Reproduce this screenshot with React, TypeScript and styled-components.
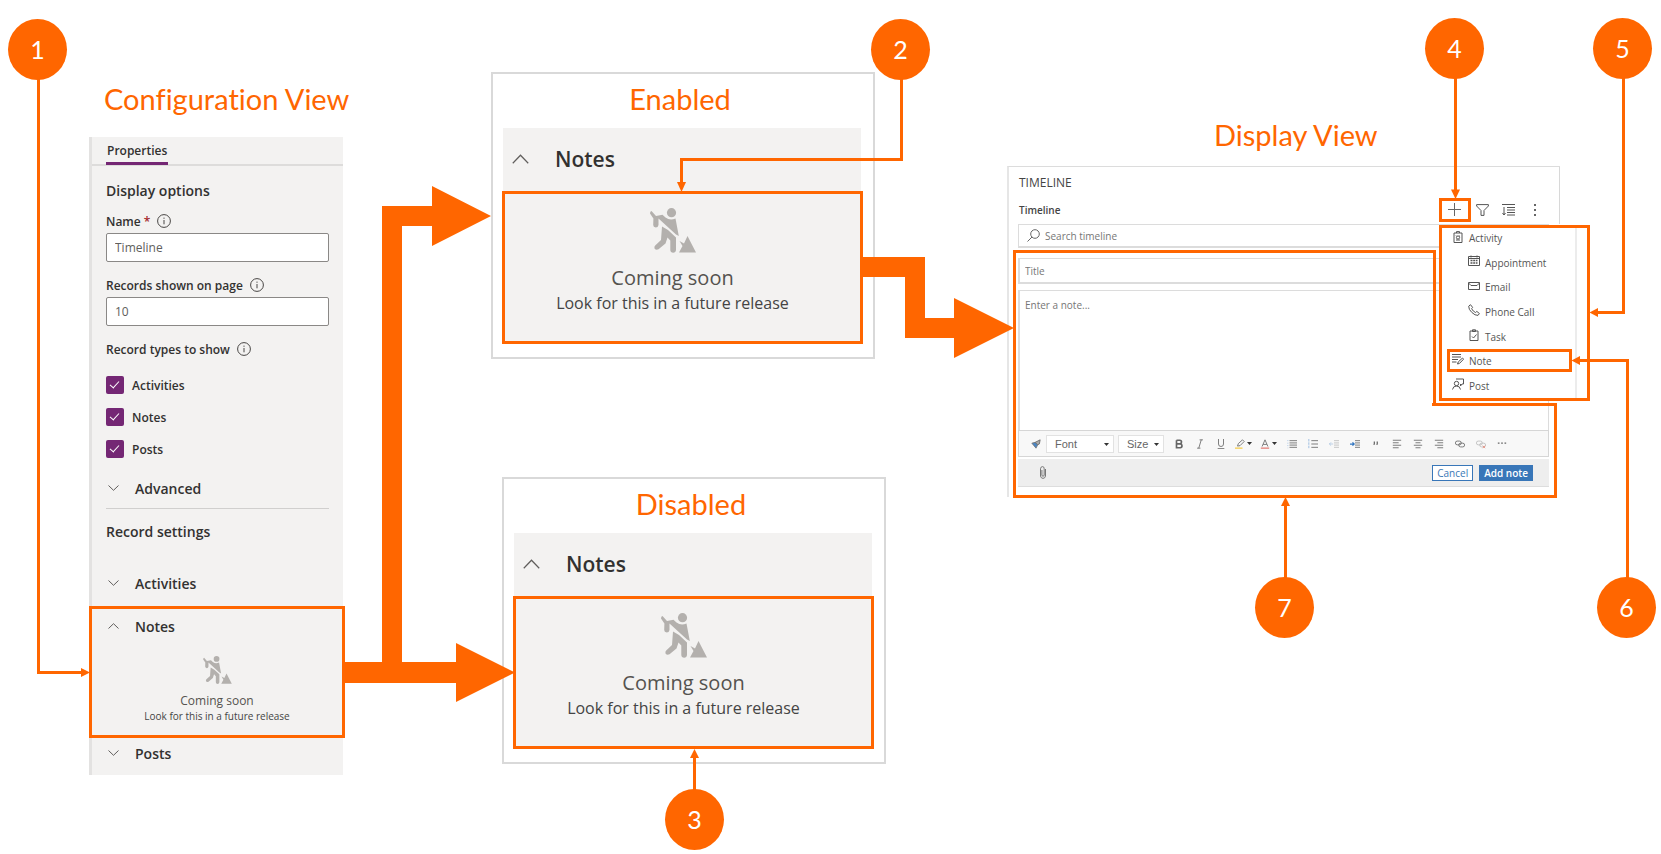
import React from "react";
import styled, { createGlobalStyle, css } from "styled-components";

const ORANGE = "#ff6600";
const PURPLE = "#742774";
const SEGOE = `"Open Sans", "Noto Sans", sans-serif`;
const CALIBRI = `Lato, "Open Sans", sans-serif`;

const GlobalStyle = createGlobalStyle`
  *, *::before, *::after { box-sizing: border-box; }
  body { margin: 0; background: #fff; font-family: ${SEGOE}; color: #323130; }
  button, input, textarea, select { font-family: inherit; font-size: inherit; color: inherit; margin: 0; border-radius: 0; }
  button { background: none; border: 0; padding: 0; }
  h1, h2, h3, p, ul { margin: 0; padding: 0; font-weight: inherit; }
  ul { list-style: none; }
  svg { display: block; flex: none; }
`;

const frame = css`border: 3px solid ${ORANGE};`;

/* ---------- page ---------- */

const Stage = styled.main`
  position: relative;
  display: flex;
  align-items: flex-start;
  min-width: max-content;
  min-height: 100vh;
  padding-left: 89px;
  overflow: hidden;
`;

const Heading = styled.h2`
  font-family: ${CALIBRI};
  font-size: 29px;
  line-height: 36px;
  font-variant-ligatures: none;
  color: ${ORANGE};
  white-space: nowrap;
`;

/* ---------- configuration panel ---------- */

const ConfigColumn = styled.section`
  flex: 0 0 254px;
  min-width: 0;
  padding-top: 81px;
  & > ${Heading} { padding-left: 15px; margin-bottom: 20px; }
`;

const PropertiesPanel = styled.div`
  background: #f3f2f1;
  border-left: 3px solid #e3e2e1;
`;

const Tabs = styled.div`
  display: flex;
  height: 29px;
  padding-left: 14px;
  border-bottom: 2px solid #dddcdb;
`;

const Tab = styled.button`
  height: 28px;
  padding: 3px 1px 0;
  font-size: 12px;
  font-weight: 600;
  line-height: 22px;
  border-bottom: 3px solid ${PURPLE};
`;

const Options = styled.div`
  padding: 13px 14px 0;
`;

const GroupTitle = styled.h3`
  font-size: 14px;
  font-weight: 600;
  line-height: 24px;
`;

const Fields = styled.div`
  padding-top: 6px;
`;

const FieldLabel = styled.div`
  display: flex;
  align-items: center;
  gap: 7px;
  height: 24px;
  font-size: 12px;
  font-weight: 600;
  white-space: nowrap;
  em { color: #a4262c; font-style: normal; margin-left: 3px; }
`;

const TextField = styled.input`
  display: block;
  width: 100%;
  height: 29px;
  padding: 0 8px;
  font-size: 12px;
  color: #605e5c;
  background: #fff;
  border: 1px solid #8a8886;
  border-radius: 2px;
`;

const Field = styled.div`
  margin-bottom: 11px;
`;

const Checks = styled.div`
  display: grid;
  gap: 14px;
  margin: 15px 0 16px;
`;

const CheckLabel = styled.label`
  display: flex;
  align-items: center;
  gap: 8px;
  height: 18px;
  font-size: 12px;
  font-weight: 600;
`;

const Checkbox = styled.input`
  appearance: none;
  position: relative;
  width: 18px;
  height: 18px;
  background: ${PURPLE};
  border-radius: 2px;
  &::after {
    content: "";
    position: absolute;
    left: 6px;
    top: 3px;
    width: 5px;
    height: 9px;
    border: solid #fff;
    border-width: 0 1px 1px 0;
    transform: rotate(42deg);
  }
`;

const Expander = styled.button<{ $large?: boolean }>`
  display: flex;
  align-items: center;
  width: 100%;
  height: ${p => (p.$large ? 63 : 28)}px;
  padding: ${p => (p.$large ? "0 9px 2px" : "0 2px")};
  gap: ${p => (p.$large ? 26 : 16)}px;
  font-size: ${p => (p.$large ? 21 : 14)}px;
  font-weight: 600;
  text-align: left;
`;

const RecordSettings = styled.div`
  margin-top: 6px;
  padding-top: 11px;
  border-top: 1px solid #d0cfce;
`;

const Spacer = styled.div`
  height: 25px;
`;

const NotesSection = styled.div`
  ${frame}
  height: 132px;
  margin: 9px -2px 0 -3px;
  padding: 3px 14px 0;
`;

const Tail = styled.div`
  padding: 1px 14px 8px;
`;

/* ---------- coming soon message ---------- */

const Message = styled.div<{ $large?: boolean }>`
  display: flex;
  flex-direction: column;
  align-items: center;
  text-align: center;
  color: #55534f;
  padding-top: ${p => (p.$large ? 14 : 16)}px;
  padding-right: ${p => (p.$large ? 20 : 0)}px;
`;

const MessageTitle = styled.p<{ $large?: boolean }>`
  margin-top: ${p => (p.$large ? 11 : 8)}px;
  font-size: ${p => (p.$large ? 20 : 12)}px;
  line-height: ${p => (p.$large ? 28 : 17)}px;
`;

const MessageText = styled.p<{ $large?: boolean }>`
  font-size: ${p => (p.$large ? 16 : 10)}px;
  line-height: ${p => (p.$large ? 22 : 14)}px;
  color: #444;
`;

/* ---------- state cards ---------- */

const StatesColumn = styled.section`
  display: flex;
  flex-direction: column;
  gap: 118px;
  flex: 0 0 395px;
  margin-left: 148px;
  padding-top: 72px;
`;

const StateCard = styled.article<{ $end?: boolean }>`
  align-self: ${p => (p.$end ? "flex-end" : "flex-start")};
  width: 384px;
  height: 287px;
  padding: 7px 12px 0 10px;
  border: 2px solid #d9d9d9;
  & > ${Heading} { text-align: center; margin-bottom: 11px; padding-right: 4px; }
`;

const StateHeader = styled.div`
  background: #f3f2f1;
`;

const StateBody = styled.div`
  ${frame}
  height: 153px;
  margin: 0 -2px 0 -1px;
  background: #f3f2f1;
`;

/* ---------- timeline display ---------- */

const DisplayColumn = styled.section`
  flex: 0 0 553px;
  margin-left: 121px;
  padding-top: 117px;
  & > ${Heading} { padding-left: 207px; margin-bottom: 13px; }
`;

const TimelinePanel = styled.div`
  border-top: 1px solid #dcdcdc;
  border-left: 2px solid #e6e6e6;
  padding-bottom: 10px;
`;

const TimelineHeader = styled.header`
  height: 57px;
  padding: 6px 10px 0;
  border-right: 1px solid #d8d8d8;
`;

const PanelTitle = styled.h3`
  font-size: 12px;
  line-height: 20px;
  color: #444;
`;

const CommandRow = styled.div`
  position: relative;
  display: flex;
  align-items: center;
  height: 24px;
  margin-top: 5px;
  strong { flex: 1; font-size: 10px; font-weight: 600; color: #444; }
`;

const AddButton = styled.button`
  ${frame}
  display: grid;
  place-items: center;
  width: 32px;
  height: 24px;
  background: #fff;
`;

const Commands = styled.div`
  display: flex;
  flex: 0 0 78px;
  gap: 2px;
  color: #555;
`;

const IconButton = styled.button`
  display: grid;
  place-items: center;
  width: 24px;
  height: 24px;
`;

const Menu = styled.ul`
  ${frame}
  position: absolute;
  top: 27px;
  right: -41px;
  z-index: 1;
  display: flex;
  flex-direction: column;
  justify-content: space-between;
  width: 151px;
  height: 176px;
  padding-bottom: 1px;
  background: linear-gradient(#ececec, #ececec) right 10px top / 2px 100% no-repeat #fff;
  font-size: 10px;
  color: #555;
`;

const MenuItem = styled.li<{ $nested?: boolean; $marked?: boolean }>`
  button {
    display: flex;
    align-items: center;
    gap: 5px;
    width: 125px;
    height: ${p => (p.$marked ? 23 : 21)}px;
    margin: ${p => (p.$marked ? "-2px 0 0 5px" : "0 0 0 5px")};
    padding-left: ${p => (p.$nested ? 21 : p.$marked ? 2 : 5)}px;
    padding-bottom: ${p => (p.$marked ? 0 : 1)}px;
    ${p => p.$marked && frame}
  }
  svg { margin-bottom: 3px; }
`;

const Form = styled.form`
  width: 540px;
  padding-left: 9px;
`;

const SearchBox = styled.label`
  display: flex;
  align-items: center;
  gap: 5px;
  height: 24px;
  padding-left: 8px;
  border: 1px solid #dcdcdc;
  border-bottom-width: 2px;
`;

const PlainInput = styled.input`
  flex: 1;
  border: 0;
  padding: 0;
  outline: 0;
  background: none;
  font-size: 10px;
  &::placeholder { color: #767676; opacity: 1; }
`;

const TitleBox = styled.label`
  display: flex;
  height: 26px;
  margin-top: 10px;
  padding-left: 5px;
  border: 1px solid #dcdcdc;
  border-width: 1px 1px 2px 2px;
`;

const NoteArea = styled.textarea`
  display: block;
  width: 100%;
  height: 140px;
  margin-top: 6px;
  padding: 6px 5px;
  border: solid #dcdcdc;
  border-width: 1px 1px 0 2px;
  resize: none;
  font-size: 10px;
  line-height: 16px;
  &::placeholder { color: #767676; opacity: 1; }
`;

const Toolbar = styled.div`
  display: flex;
  align-items: center;
  height: 27px;
  padding-left: 6px;
  border: 1px solid #d6d6d6;
  background: #f8f8f8;
  color: #666;
`;

const Tool = styled.button<{ $wide?: boolean }>`
  display: flex;
  align-items: center;
  justify-content: center;
  gap: 2px;
  width: ${p => (p.$wide ? 25 : 21)}px;
  height: 20px;
`;

const Picker = styled.span<{ $width: number }>`
  position: relative;
  width: ${p => p.$width}px;
  margin-right: 4px;
  select {
    appearance: none;
    display: block;
    width: 100%;
    height: 18px;
    padding: 0 8px;
    font: 11px "Liberation Sans", sans-serif;
    background: #fff;
    border: 1px solid #e2e2e2;
  }
  svg { position: absolute; right: 5px; top: 8px; }
`;

const Footer = styled.div`
  display: flex;
  align-items: center;
  gap: 6px;
  height: 28px;
  margin-top: 2px;
  padding: 0 16px 0 20px;
  background: #eee;
  border-bottom: 1px solid #ddd;
  svg { margin-right: auto; }
`;

const Action = styled.button<{ $primary?: boolean }>`
  height: 16px;
  padding: 0 4px;
  font-size: 10px;
  line-height: 14px;
  font-weight: ${p => (p.$primary ? 600 : 400)};
  color: ${p => (p.$primary ? "#fff" : "#3a78b5")};
  background: ${p => (p.$primary ? "#3876b8" : "#fff")};
  border: 1px solid #3876b8;
`;

/* ---------- callouts ---------- */

const Connectors = styled.svg`
  position: absolute;
  left: 0;
  top: 0;
  z-index: 2;
  pointer-events: none;
`;

const Badge = styled.span<{ $x: number; $y: number }>`
  position: absolute;
  left: ${p => p.$x}px;
  top: ${p => p.$y}px;
  z-index: 3;
  display: grid;
  place-items: center;
  width: 59px;
  height: 61px;
  padding-bottom: 1px;
  border-radius: 50%;
  background: ${ORANGE};
  color: #fff;
  font-family: ${CALIBRI};
  font-size: 25px;
`;

const badges = [
  { n: 1, x: 8, y: 19 },
  { n: 2, x: 871, y: 19 },
  { n: 3, x: 665, y: 789 },
  { n: 4, x: 1425, y: 18 },
  { n: 5, x: 1593, y: 18 },
  { n: 6, x: 1597, y: 577 },
  { n: 7, x: 1255, y: 577 },
];

function Callouts() {
  return (
    <>
      <Connectors width="1661" height="854" viewBox="0 0 1661 854" aria-hidden="true">
        <g fill={ORANGE}>
          <path d="M345 662H382V206H432V186L491 216L432 246V226H402V662H456V643L515 672.500L456 702V683H345Z" />
          <path d="M861 257H925V318H954V298L1014 328L954 358V338H905V277H861Z" />
          <path d="M90 672.500L81 668V677Z" />
          <path d="M681.500 192L677 182H686Z" />
          <path d="M694.500 749L690 758H699Z" />
          <path d="M1455.500 199L1451 189.500H1460Z" />
          <path d="M1589.500 312.500L1598 308V317Z" />
          <path d="M1571.500 360.500L1580 356V365Z" />
          <path d="M1285.500 497L1281 506H1290Z" />
        </g>
        <g fill="none" stroke={ORANGE} strokeWidth="3">
          <path d="M38.500 76V672.500H84" />
          <path d="M901.500 76V159.500H681.500V184" />
          <path d="M694.500 795V756" />
          <path d="M1455.500 76V192" />
          <path d="M1623.500 76V312.500H1596" />
          <path d="M1627.500 580V360.500H1578" />
          <path d="M1285.500 580V504" />
          <path d="M1014.500 251.500H1434.500V404.500H1555.500V496.500H1014.500Z" />
          <path d="M1432 404.500H1436" />
        </g>
      </Connectors>
      {badges.map(b => (
        <Badge key={b.n} $x={b.x} $y={b.y}>{b.n}</Badge>
      ))}
    </>
  );
}

/* ---------- icons ---------- */

const line = { fill: "none", stroke: "currentColor", strokeWidth: 1 };

const Chevron = ({ up, large }: { up?: boolean; large?: boolean }) => (
  <svg width={large ? 17 : 11} height={large ? 10 : 6} viewBox="0 0 11 6" preserveAspectRatio="none" {...line} stroke="#605e5c" strokeWidth={large ? 0.8 : 1}>
    <path d={up ? "M.5 5.500L5.500.700L10.500 5.500" : "M.5.500L5.500 5.300L10.500.500"} />
  </svg>
);

const Info = () => (
  <svg width="14" height="14" viewBox="0 0 14 14" {...line} stroke="#484644">
    <circle cx="7" cy="7" r="6.400" />
    <path d="M7 6V10.300M7 3.600V4.800" />
  </svg>
);

const Worker = ({ large }: { large?: boolean }) => (
  <svg width={large ? 46 : 29} height={large ? 45 : 28} viewBox="0 0 46 45" fill="#b3b0ad">
    <circle cx="21.500" cy="4.700" r="4.600" />
    <path d="M1.500 3L6 8L12.500 6.800L15.500 9.500Q20 13 25.500 10.500L28.800 28L26 26.500L8.500 10.500V17Q8 19.500 5.800 19.500Q3.200 19.300 3.200 17L3.400 10.500L0 5.500Q0 3.300 1.500 3Z" />
    <path d="M12 18.500L18 22L26 29.500V42Q25.600 44.800 23.200 44.800Q20.500 44.800 20.300 42V32.500L17.500 29.500L15.500 35.500L8.500 41.300Q6 42.500 4.500 40.500Q4 38.500 5.200 37.500L11 32Z" />
    <path d="M29.500 33L34 35.500L37.500 28L46 44.500H29L32.500 38Z" />
  </svg>
);

const Caret = () => (
  <svg width="5" height="3" viewBox="0 0 5 3" fill="#333"><path d="M0 0H5L2.500 3Z" /></svg>
);

const Small = ({ children, size = 12 }: { children: React.ReactNode; size?: number }) => (
  <svg width={size} height={size} viewBox="0 0 12 12" {...line}>{children}</svg>
);

const glyphs = {
  activity: <><path d="M2 2H10V11.500H2ZM4.500 2V.600H7.500V2" /><circle cx="6" cy="6.500" r="1.600" /><path d="M4 4.500L4.800 5.300M8 4.500L7.200 5.300M4 9H8" /></>,
  appointment: <><path d="M.5 1.500H11.500V10.500H.5ZM.5 3.500H11.500M3 .500V2.500M9 .500V2.500" /><path d="M2.500 5.500H9.500M2.500 8H9.500" strokeWidth="1.500" strokeDasharray="2 .700" /></>,
  email: <path d="M.5 2.500H11.500V9.500H.5ZM.5 3L3 5.500H9L11.500 3" />,
  phone: <path d="M2.500.700L.700 2.200Q.500 5.500 3.800 8.400Q7 11.600 10 11.400L11.400 9.500L8.800 7.400L7.500 8.500Q5 7.400 3.600 4.700L4.600 3.400Z" />,
  task: <><path d="M2 2H10V11.500H2ZM4.500 2.500V.800H7.500V2.500Z" /><path d="M4 7.500L5.500 9L8.500 5.500" /></>,
  note: <><path d="M0 1.500H9M0 4H9M0 6.500H6M0 9H4.500" strokeWidth="1.200" /><path d="M5.500 11L6.200 9L10.500 5L11.600 6.200L7.500 10.400Z" /></>,
  post: <><circle cx="4.500" cy="5.500" r="2.200" /><path d="M.5 11.500Q1 8 4.500 8T8.500 11.500M4 1H11.500V6H10L8.500 8V6" /></>,
};

const Lines = ({ w, x }: { w: number; x: number }) => (
  <Small size={10}><path d={`M1 1.500H11M${x} 4.500H${x + w}M1 7.500H11M${x} 10.500H${x + w}`} /></Small>
);

/* ---------- parts ---------- */

function ComingSoon({ large }: { large?: boolean }) {
  return (
    <Message $large={large}>
      <Worker large={large} />
      <MessageTitle $large={large}>Coming soon</MessageTitle>
      <MessageText $large={large}>Look for this in a future release</MessageText>
    </Message>
  );
}

function State({ title, end }: { title: string; end?: boolean }) {
  return (
    <StateCard $end={end}>
      <Heading>{title}</Heading>
      <StateHeader>
        <Expander $large aria-expanded="true"><Chevron up large />Notes</Expander>
      </StateHeader>
      <StateBody><ComingSoon large /></StateBody>
    </StateCard>
  );
}

function Configuration() {
  return (
    <ConfigColumn>
      <Heading>Configuration View</Heading>
      <PropertiesPanel>
        <Tabs><Tab>Properties</Tab></Tabs>
        <Options>
          <GroupTitle>Display options</GroupTitle>
          <Fields>
            <Field>
              <FieldLabel><label htmlFor="name">Name<em>*</em></label><Info /></FieldLabel>
              <TextField id="name" defaultValue="Timeline" />
            </Field>
            <Field>
              <FieldLabel><label htmlFor="records">Records shown on page</label><Info /></FieldLabel>
              <TextField id="records" defaultValue="10" />
            </Field>
            <FieldLabel>Record types to show <Info /></FieldLabel>
            <Checks>
              {["Activities", "Notes", "Posts"].map(t => (
                <CheckLabel key={t}><Checkbox type="checkbox" defaultChecked />{t}</CheckLabel>
              ))}
            </Checks>
          </Fields>
          <Expander><Chevron />Advanced</Expander>
          <RecordSettings>
            <GroupTitle>Record settings</GroupTitle>
            <Spacer />
            <Expander><Chevron />Activities</Expander>
          </RecordSettings>
        </Options>
        <NotesSection>
          <Expander aria-expanded="true"><Chevron up />Notes</Expander>
          <ComingSoon />
        </NotesSection>
        <Tail><Expander><Chevron />Posts</Expander></Tail>
      </PropertiesPanel>
    </ConfigColumn>
  );
}

const menuItems: { label: string; icon: keyof typeof glyphs; nested?: boolean; marked?: boolean }[] = [
  { label: "Activity", icon: "activity" },
  { label: "Appointment", icon: "appointment", nested: true },
  { label: "Email", icon: "email", nested: true },
  { label: "Phone Call", icon: "phone", nested: true },
  { label: "Task", icon: "task", nested: true },
  { label: "Note", icon: "note", marked: true },
  { label: "Post", icon: "post" },
];

function Display() {
  return (
    <DisplayColumn>
      <Heading>Display View</Heading>
      <TimelinePanel>
        <TimelineHeader>
          <PanelTitle>TIMELINE</PanelTitle>
          <CommandRow>
            <strong>Timeline</strong>
            <AddButton aria-label="Add">
              <svg width="14" height="14" viewBox="0 0 14 14" {...line} stroke="#666"><path d="M6.500 0V13M0 6.500H13" /></svg>
            </AddButton>
            <Commands>
              <IconButton aria-label="Filter">
                <svg width="14" height="12" viewBox="0 0 14 12" {...line}><path d="M.600.600H12.400V2L8 6.500V11.400H5V6.500L.600 2Z" /></svg>
              </IconButton>
              <IconButton aria-label="Sort">
                <svg width="14" height="12" viewBox="0 0 14 12" {...line}><path d="M0 .500H13M5 3.500H13M5 6H13M5 8.500H13M5 11H13M2 3V11M.500 9L2 11L3.500 9" /></svg>
              </IconButton>
              <IconButton aria-label="More">
                <svg width="4" height="12" viewBox="0 0 4 12" fill="#666"><path d="M1 0H3V2H1ZM1 5H3V7H1ZM1 10H3V12H1Z" /></svg>
              </IconButton>
            </Commands>
            <Menu>
              {menuItems.map(m => (
                <MenuItem key={m.label} $nested={m.nested} $marked={m.marked}>
                  <button><Small>{glyphs[m.icon]}</Small>{m.label}</button>
                </MenuItem>
              ))}
            </Menu>
          </CommandRow>
        </TimelineHeader>
        <Form onSubmit={e => e.preventDefault()}>
          <SearchBox>
            <svg width="13" height="13" viewBox="0 0 13 13" {...line} stroke="#666"><circle cx="8" cy="5" r="4.300" /><path d="M5 8L.500 12.500" /></svg>
            <PlainInput placeholder="Search timeline" aria-label="Search timeline" />
          </SearchBox>
          <TitleBox><PlainInput placeholder="Title" aria-label="Title" /></TitleBox>
          <NoteArea placeholder="Enter a note..." aria-label="Note" />
          <Toolbar>
            <Tool type="button" aria-label="Copy formatting">
              <Small size={10}><path d="M1 5L5 4L8 7L6 11Z" fill="#4a86c5" stroke="#777" /><path d="M5 4L11 1L10 6L8 7Z" fill="#aaa" stroke="#666" /></Small>
            </Tool>
            <Picker $width={68}><select aria-label="Font"><option>Font</option></select><Caret /></Picker>
            <Picker $width={46}><select aria-label="Size"><option>Size</option></select><Caret /></Picker>
            <Tool type="button" aria-label="Bold"><Small size={10}><path d="M3 1.500H7Q9 1.500 9 3.500T7 5.800H3M3 5.800H7.500Q9.600 6 9.600 8.200T7.500 10.500H3ZV1.500" strokeWidth="2" /></Small></Tool>
            <Tool type="button" aria-label="Italic"><Small size={10}><path d="M5.500 1H9.500M2.500 11H6.500M7.500 1L4.500 11" /></Small></Tool>
            <Tool type="button" aria-label="Underline"><Small size={10}><path d="M3 0V6Q3 9 6 9T9 6V0M2 11.500H10" /></Small></Tool>
            <Tool type="button" $wide aria-label="Highlight colour"><Small size={10}><path d="M3 8.500L4 5.500L9 1L11 3L6 8Z" /><path d="M0 11H9" stroke="#f7d774" strokeWidth="2" /></Small><Caret /></Tool>
            <Tool type="button" $wide aria-label="Font colour"><Small size={10}><path d="M2.500 9L6 1L9.500 9M3.800 6.500H8.200" /><path d="M1 11H11" stroke="#e89a95" strokeWidth="2" /></Small><Caret /></Tool>
            <Tool type="button" aria-label="Bulleted list"><Small size={10}><path d="M3 2H12M3 4.700H12M3 7.300H12M3 10H12" /><path d="M1 1.500V11" stroke="#8fb4dd" strokeDasharray="1 2" /></Small></Tool>
            <Tool type="button" aria-label="Numbered list"><Small size={10}><path d="M4 2H12M4 6H12M4 10H12" /><path d="M1 0V12" stroke="#8fb4dd" strokeDasharray="3 1" /></Small></Tool>
            <Tool type="button" aria-label="Outdent"><Small size={10}><g opacity=".4"><path d="M6 2H12M6 4.700H12M6 7.300H12M6 10H12" /><path d="M5 6H0M2.500 4L.500 6L2.500 8" stroke="#4a86c5" /></g></Small></Tool>
            <Tool type="button" aria-label="Indent"><Small size={10}><path d="M6 2H12M6 4.700H12M6 7.300H12M6 10H12" /><path d="M0 6H5M3 4L5 6L3 8" stroke="#2f74c0" strokeWidth="1.500" /></Small></Tool>
            <Tool type="button" aria-label="Quote"><Small size={10}><path d="M4 3V5.500L3.500 7M7.500 3V5.500L7 7" strokeWidth="1.500" /></Small></Tool>
            <Tool type="button" aria-label="Align left"><Lines x={1} w={7} /></Tool>
            <Tool type="button" aria-label="Align centre"><Lines x={3} w={6} /></Tool>
            <Tool type="button" aria-label="Align right"><Lines x={4} w={7} /></Tool>
            <Tool type="button" aria-label="Link"><Small size={10}><rect x=".5" y="2.500" width="7" height="4.500" rx="2.200" /><rect x="4.500" y="5" width="7" height="4.500" rx="2.200" /></Small></Tool>
            <Tool type="button" aria-label="Unlink"><Small size={10}><g opacity=".4"><rect x=".5" y="2.500" width="7" height="4.500" rx="2.200" /><rect x="4.500" y="5" width="7" height="4.500" rx="2.200" /></g><path d="M8 8L11 11M11 8L8 11" stroke="#e58a7a" /></Small></Tool>
            <Tool type="button" aria-label="More tools"><Small size={10}><path d="M1 5H3M5 5H7M9 5H11" strokeWidth="1.500" /></Small></Tool>
          </Toolbar>
          <Footer>
            <svg width="10" height="13" viewBox="0 0 10 13" {...line} stroke="#777"><path d="M7.500 3V10Q7 12.400 5 12.400T2.500 10V2.800Q2.700.600 4.500.600T6.200 2.800V9Q6 10.300 5 10.300T3.900 9V4" /></svg>
            <Action type="button">Cancel</Action>
            <Action type="submit" $primary>Add note</Action>
          </Footer>
        </Form>
      </TimelinePanel>
    </DisplayColumn>
  );
}

export default function App() {
  return (
    <>
      <GlobalStyle />
      <Stage>
        <Configuration />
        <StatesColumn>
          <State title="Enabled" />
          <State title="Disabled" end />
        </StatesColumn>
        <Display />
        <Callouts />
      </Stage>
    </>
  );
}
